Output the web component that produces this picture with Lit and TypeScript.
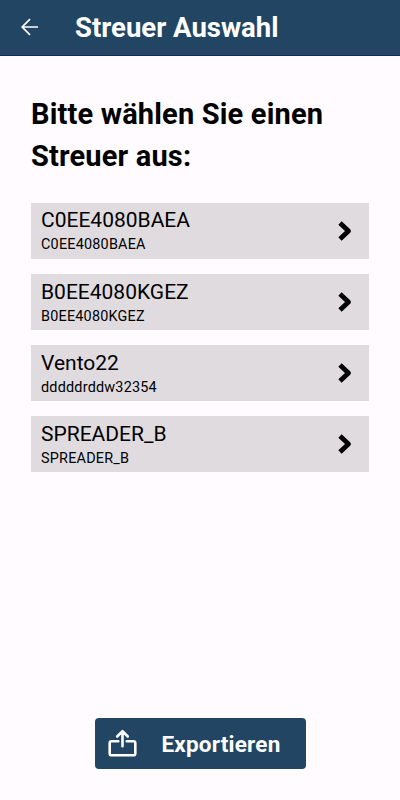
import { LitElement, html, css } from "lit";
import { customElement } from "lit/decorators.js";

const spreaders = [
  { name: "C0EE4080BAEA", serial: "C0EE4080BAEA" },
  { name: "B0EE4080KGEZ", serial: "B0EE4080KGEZ" },
  { name: "Vento22", serial: "dddddrddw32354" },
  { name: "SPREADER_B", serial: "SPREADER_B" },
];

@customElement("app-root")
export class AppRoot extends LitElement {
  static styles = css`
    :host { display: flex; flex-direction: column; height: 800px; box-sizing: border-box; background: #fffbfe; color: #000; font-family: Roboto, sans-serif; }
    * { box-sizing: border-box; }
    header { height: 56px; flex: none; background: #224563; border-bottom: 1px solid #0e2c55; color: #fff; display: flex; align-items: center; padding: 0 0 1px 20px; }
    header svg { width: 20px; height: 20px; flex: none; }
    h1 { margin: 1px 0 0 35px; font-size: 27.5px; line-height: 32px; font-weight: 700; white-space: nowrap; }
    main { flex: 1; padding: 37px 31px 0; }
    h2 { margin: 0; font-size: 29px; line-height: 42px; letter-spacing: 0.17px; font-weight: 700; white-space: nowrap; }
    .list { display: flex; flex-direction: column; gap: 15px; margin-top: 25.6px; }
    .row { height: 56.2px; background: #e0dbdf; display: flex; align-items: center; justify-content: space-between; padding: 0 16px 0 10px; }
    .text { padding-top: 3.6px; }
    .name { font-size: 21px; line-height: 26px; }
    .serial { font-size: 14.4px; line-height: 24px; letter-spacing: 0.22px; }
    .row svg { width: 16px; height: 22px; }
    footer { display: flex; justify-content: center; padding-bottom: 31px; }
    button { width: 211px; height: 51px; border: 0; border-radius: 4px; background: #224563; color: #fff; font: 700 22.5px/30px Roboto, sans-serif; letter-spacing: 0.2px; display: flex; align-items: center; padding: 0 0 0 12px; gap: 23px; }
    button svg { width: 32px; height: 32px; flex: none; }
  `;

  render() {
    return html`
      <header>
        <svg viewBox="0 0 20 20" fill="none" stroke="currentColor" stroke-width="1.7"><path d="M18 10H2.500M10 2.200L2.200 10l7.800 7.800" /></svg>
        <h1>Streuer Auswahl</h1>
      </header>
      <main>
        <h2>Bitte wählen Sie einen<br />Streuer aus:</h2>
        <div class="list">
          ${spreaders.map((s) => html`
            <div class="row">
              <div class="text"><div class="name">${s.name}</div><div class="serial">${s.serial}</div></div>
              <svg viewBox="0 0 16 22" fill="none" stroke="currentColor" stroke-width="4.8" stroke-linejoin="round"><path d="M3 3l8.500 8L3 19" /></svg>
            </div>`)}
        </div>
      </main>
      <footer>
        <button>
          <svg viewBox="0 0 32 32" fill="none" stroke="currentColor" stroke-width="2.6" stroke-linejoin="round" stroke-linecap="round"><path d="M11.300 13.300H4.500Q2.700 13.300 2.700 15.100V25.400Q2.700 27.200 4.500 27.200H26.500Q28.300 27.200 28.300 25.400V15.100Q28.300 13.300 26.500 13.300H19.700M15.500 18.200V3.700M10.200 8.500L15.500 3.200l5.300 5.300" /></svg>
          <span>Exportieren</span>
        </button>
      </footer>
    `;
  }
}
